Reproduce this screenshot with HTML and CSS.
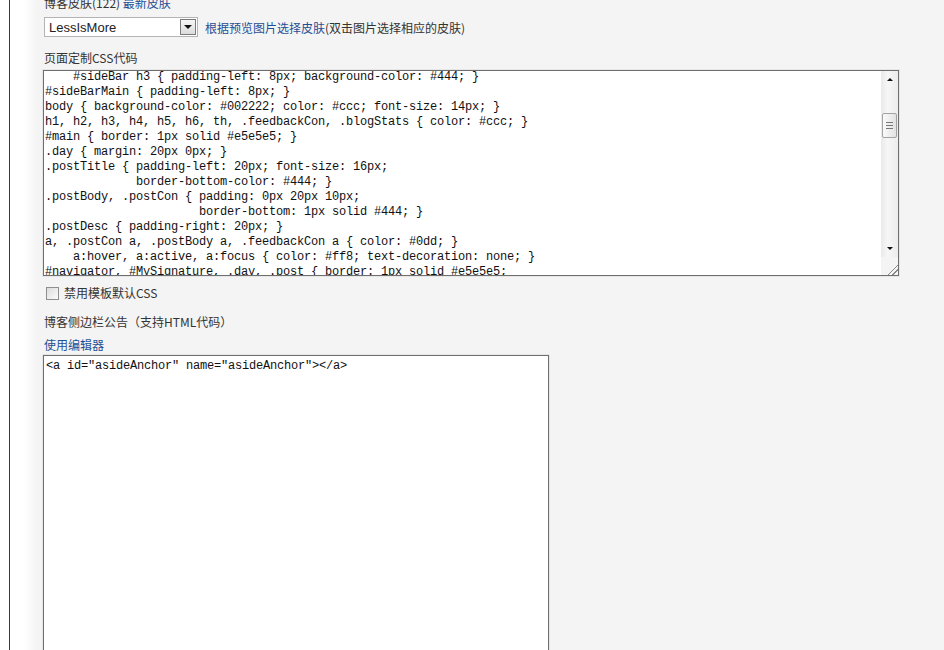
FILE: index.html
```html
<!DOCTYPE html>
<html lang="zh-CN">
<head>
    <meta charset="UTF-8" />
    <title>博客设置</title>
    <link rel="stylesheet" href="styles.css">
</head>
<body>
    <div class="page">
        <div class="gutter"></div>
        <div class="shade"></div>
        <div class="panel">
            <div class="line skin-head">博客皮肤(122) <a href="#">最新皮肤</a></div>

            <div class="skin-pick">
                <div class="select">
                    <span class="select-text">LessIsMore</span>
                    <span class="select-btn"><span class="tri-down"></span></span>
                </div>
                <a href="#">根据预览图片选择皮肤</a><span>(双击图片选择相应的皮肤)</span>
            </div>

            <div class="line label-css">页面定制CSS代码</div>

            <div class="code-box css-box">
                <pre class="code">    #sideBar h3 { padding-left: 8px; background-color: #444; }
#sideBarMain { padding-left: 8px; }
body { background-color: #002222; color: #ccc; font-size: 14px; }
h1, h2, h3, h4, h5, h6, th, .feedbackCon, .blogStats { color: #ccc; }
#main { border: 1px solid #e5e5e5; }
.day { margin: 20px 0px; }
.postTitle { padding-left: 20px; font-size: 16px;
             border-bottom-color: #444; }
.postBody, .postCon { padding: 0px 20px 10px;
                      border-bottom: 1px solid #444; }
.postDesc { padding-right: 20px; }
a, .postCon a, .postBody a, .feedbackCon a { color: #0dd; }
    a:hover, a:active, a:focus { color: #ff8; text-decoration: none; }
#navigator, #MySignature, .day, .post { border: 1px solid #e5e5e5;
</pre>
                <div class="vscroll">
                    <div class="arrow"><span class="tri-up small"></span></div>
                    <div class="track">
                        <div class="thumb"><i></i><i></i><i></i></div>
                    </div>
                    <div class="arrow"><span class="tri-down small"></span></div>
                    <div class="grip"></div>
                </div>
            </div>

            <label class="line check">
                <span class="check-box"></span>禁用模板默认CSS
            </label>

            <div class="line label-side">博客侧边栏公告（支持HTML代码）</div>
            <a href="#" class="line editor-link">使用编辑器</a>

            <div class="code-box side-box">
                <pre class="code">&lt;a id="asideAnchor" name="asideAnchor"&gt;&lt;/a&gt;</pre>
            </div>
        </div>
    </div>
</body>
</html>
```

FILE: styles.css
```css
* {
    margin: 0;
    padding: 0;
    box-sizing: border-box;
}

html,
body {
    height: 100%;
    overflow: hidden;
    background: #f4f4f4;
}

body {
    font-family: 'Noto Sans CJK SC', 'Liberation Sans', sans-serif;
    font-size: 12px;
    color: #333;
}

a {
    color: #1f4f96;
    text-decoration: none;
}

.page {
    display: flex;
    height: 650px;
}

.gutter {
    width: 10px;
    background: #fff;
    border-right: 1px solid #3a3a3a;
}

.shade {
    width: 27px;
    background: linear-gradient(to right, #fff 0, #fff 14px, #f4f4f4 27px);
}

.panel {
    flex: 1;
    padding-left: 6px;
    display: flex;
    flex-direction: column;
    align-items: flex-start;
}

.panel > * {
    flex-shrink: 0;
}

.line {
    line-height: 16px;
    height: 16px;
    padding-left: 1px;
}

.skin-head {
    margin-top: -5px;
}

/* skin select row */
.skin-pick {
    margin-top: 6px;
    display: flex;
    align-items: center;
    height: 20px;
    padding-left: 1px;
}

.select {
    width: 154px;
    height: 20px;
    border: 1px solid #b4b4b4;
    background: #fff;
    display: flex;
    align-items: center;
    justify-content: space-between;
    padding: 0 1px 0 4px;
    margin-right: 7px;
}

.select-text {
    font-family: 'Liberation Sans', sans-serif;
    font-size: 13px;
    color: #222;
}

.select-btn {
    width: 16px;
    height: 16px;
    border: 1px solid #7b7b7b;
    background: linear-gradient(#f6f6f6, #dcdcdc);
    display: flex;
    align-items: center;
    justify-content: center;
}

.tri-down {
    width: 0;
    height: 0;
    border-left: 4px solid transparent;
    border-right: 4px solid transparent;
    border-top: 4px solid #111;
}

.tri-up {
    width: 0;
    height: 0;
    border-left: 4px solid transparent;
    border-right: 4px solid transparent;
    border-bottom: 4px solid #111;
}

.small {
    border-left-width: 3px;
    border-right-width: 3px;
    border-top-width: 3px;
    border-bottom-width: 3px;
}

.tri-up.small {
    border-top: none;
}

.tri-down.small {
    border-bottom: none;
}

.label-css {
    margin-top: 13px;
}

/* textareas */
.code-box {
    border: 1px solid #6f6f6f;
    background: #fff;
    box-shadow: 0 0 0 1px #e6e6e6;
    overflow: hidden;
    display: flex;
}

.code {
    flex: 1;
    font-family: 'Liberation Mono', monospace;
    font-size: 12px;
    letter-spacing: -0.2px;
    line-height: 15px;
    color: #111;
    padding-left: 1px;
    margin-top: -1px;
    white-space: pre;
    overflow: hidden;
}

.css-box {
    margin-top: 4px;
    width: 856px;
    height: 206px;
}

.vscroll {
    width: 17px;
    display: flex;
    flex-direction: column;
    background: linear-gradient(to right, #eaeaea, #f6f6f6 40%, #ececec);
}

.arrow {
    height: 17px;
    display: flex;
    align-items: center;
    justify-content: center;
}

.track {
    flex: 1;
    padding-top: 25px;
}

.thumb {
    margin: 0 auto;
    width: 15px;
    height: 25px;
    border: 1px solid #a3a3a3;
    border-radius: 2px;
    background: linear-gradient(to right, #fafafa, #e2e2e2);
    display: flex;
    flex-direction: column;
    align-items: center;
    justify-content: center;
    gap: 2px;
}

.thumb i {
    display: block;
    width: 7px;
    height: 1px;
    background: #777;
}

.grip {
    height: 18px;
    background:
        linear-gradient(135deg, transparent 0 70%, #888 70% 74%, transparent 74% 82%, #888 82% 86%, transparent 86%);
    background-color: #f4f4f4;
}

.check {
    margin-top: 9px;
    display: flex;
    align-items: center;
    padding-left: 3px;
}

.check-box {
    width: 13px;
    height: 13px;
    border: 1px solid #8e8e8e;
    background: linear-gradient(135deg, #dcdcdc, #fbfbfb);
    margin-right: 5px;
}

.label-side {
    margin-top: 13px;
}

.editor-link {
    margin-top: 7px;
    display: block;
}

.side-box {
    margin-top: 2px;
    width: 506px;
    height: 320px;
}

.side-box .code {
    padding-left: 2px;
    margin-top: 3px;
}
```
